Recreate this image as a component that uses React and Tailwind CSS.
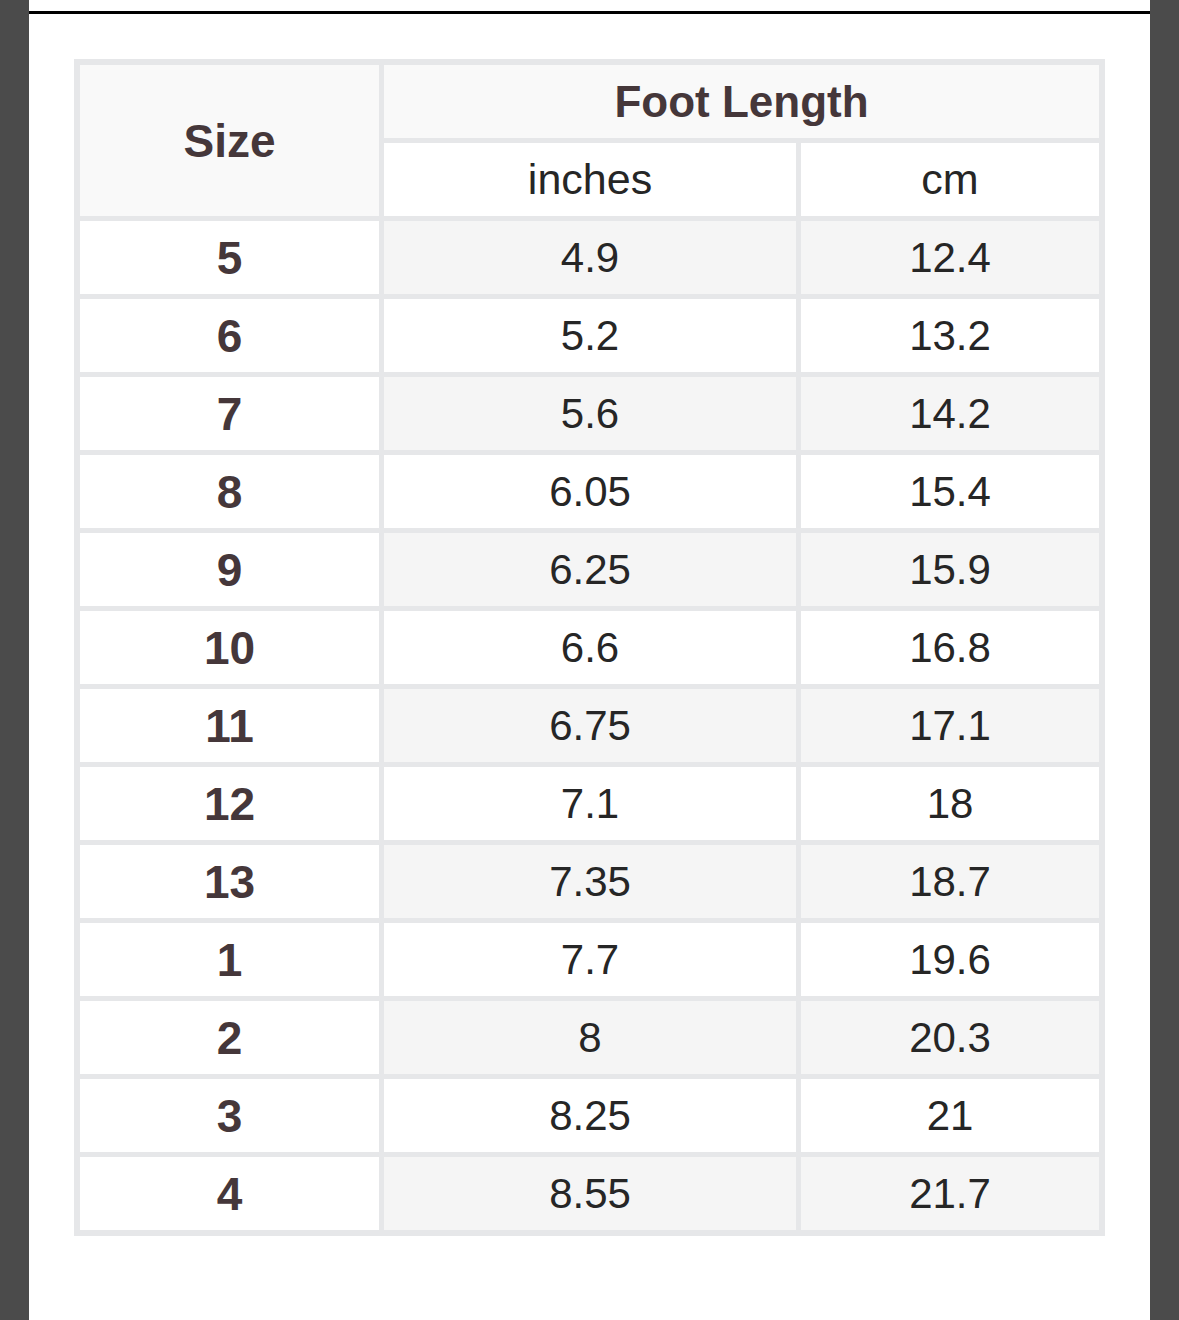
import React from 'react';

const rows = [
  ['5', '4.9', '12.4'],
  ['6', '5.2', '13.2'],
  ['7', '5.6', '14.2'],
  ['8', '6.05', '15.4'],
  ['9', '6.25', '15.9'],
  ['10', '6.6', '16.8'],
  ['11', '6.75', '17.1'],
  ['12', '7.1', '18'],
  ['13', '7.35', '18.7'],
  ['1', '7.7', '19.6'],
  ['2', '8', '20.3'],
  ['3', '8.25', '21'],
  ['4', '8.55', '21.7'],
];

const SizeChart = () => {
  return (
    <div className="grid grid-cols-[299px_412px_298px] auto-rows-[73px] gap-[5px] p-[6px] bg-[#e6e7e9]">
      {/* Header */}
      <div className="row-span-2 bg-[#f9f9f9] flex items-center justify-center font-bold text-[46px] text-[#45373a]">
        Size
      </div>
      <div className="col-span-2 bg-[#f9f9f9] flex items-center justify-center font-bold text-[44px] text-[#45373a]">
        Foot Length
      </div>
      <div className="bg-white flex items-center justify-center text-[43px] text-[#262626]">inches</div>
      <div className="bg-white flex items-center justify-center text-[43px] text-[#262626]">cm</div>

      {/* Body */}
      {rows.map(([size, inches, cm], i) => {
        const shade = i % 2 === 0 ? 'bg-[#f5f5f5]' : 'bg-white';
        return (
          <React.Fragment key={size}>
            <div className="bg-white flex items-center justify-center font-bold text-[46px] text-[#45373a]">
              {size}
            </div>
            <div className={`${shade} flex items-center justify-center text-[42px] text-[#262626]`}>
              {inches}
            </div>
            <div className={`${shade} flex items-center justify-center text-[42px] text-[#262626]`}>
              {cm}
            </div>
          </React.Fragment>
        );
      })}
    </div>
  );
};

export default function App() {
  return (
    <div className="flex h-[1320px] w-[1179px] overflow-hidden bg-white font-['Liberation_Sans',Arial,sans-serif] leading-none">
      <div className="w-[29px] bg-[#4b4b4b]" />
      <div className="flex-1 bg-white pt-[11px]">
        <div className="border-t-[3px] border-black pt-[45px] px-[45px]">
          <SizeChart />
        </div>
      </div>
      <div className="w-[29px] bg-[#4b4b4b]" />
    </div>
  );
}
